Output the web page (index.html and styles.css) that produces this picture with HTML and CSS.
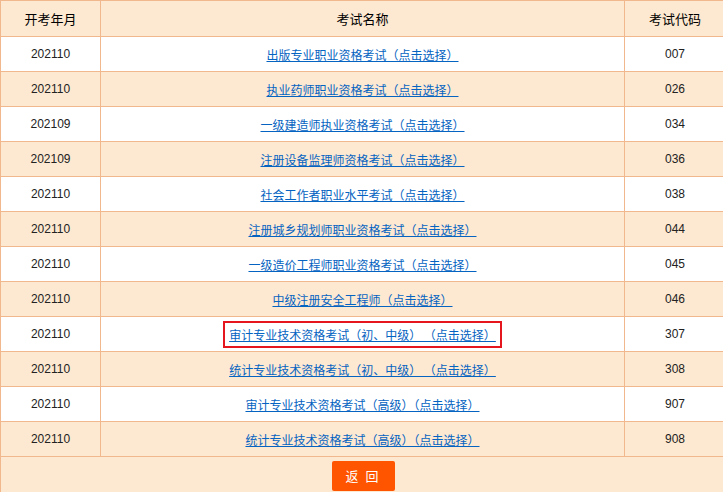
FILE: index.html
```html
<!DOCTYPE html>
<html lang="zh-CN">
<head>
  <meta charset="UTF-8">
  <title>考试选择</title>
  <link rel="stylesheet" href="styles.css">
</head>
<body>
  <table class="exam-table">
    <tr class="head">
      <th class="col-date">开考年月</th>
      <th class="col-name">考试名称</th>
      <th class="col-code">考试代码</th>
    </tr>
    <tr><td>202110</td><td><a href="#">出版专业职业资格考试（点击选择）</a></td><td>007</td></tr>
    <tr class="alt"><td>202110</td><td><a href="#">执业药师职业资格考试（点击选择）</a></td><td>026</td></tr>
    <tr><td>202109</td><td><a href="#">一级建造师执业资格考试（点击选择）</a></td><td>034</td></tr>
    <tr class="alt"><td>202109</td><td><a href="#">注册设备监理师资格考试（点击选择）</a></td><td>036</td></tr>
    <tr><td>202110</td><td><a href="#">社会工作者职业水平考试（点击选择）</a></td><td>038</td></tr>
    <tr class="alt"><td>202110</td><td><a href="#">注册城乡规划师职业资格考试（点击选择）</a></td><td>044</td></tr>
    <tr><td>202110</td><td><a href="#">一级造价工程师职业资格考试（点击选择）</a></td><td>045</td></tr>
    <tr class="alt"><td>202110</td><td><a href="#">中级注册安全工程师（点击选择）</a></td><td>046</td></tr>
    <tr><td>202110</td><td><a href="#" class="selected">审计专业技术资格考试（初、中级） （点击选择）</a></td><td>307</td></tr>
    <tr class="alt"><td>202110</td><td><a href="#">统计专业技术资格考试（初、中级） （点击选择）</a></td><td>308</td></tr>
    <tr><td>202110</td><td><a href="#">审计专业技术资格考试（高级）（点击选择）</a></td><td>907</td></tr>
    <tr class="alt"><td>202110</td><td><a href="#">统计专业技术资格考试（高级）（点击选择）</a></td><td>908</td></tr>
    <tr class="alt foot">
      <td colspan="3"><button class="back-btn">返 回</button></td>
    </tr>
  </table>
</body>
</html>
```

FILE: styles.css
```css
* {
  margin: 0;
  padding: 0;
  box-sizing: border-box;
}

body {
  background: #fff;
  font-family: "Liberation Sans", "Noto Sans CJK SC", sans-serif;
  font-size: 12px;
  color: #222;
}

.exam-table {
  width: 725px;
  border-collapse: collapse;
  table-layout: fixed;
}

.exam-table th,
.exam-table td {
  border: 1px solid #f1b88e;
  text-align: center;
  height: 35px;
  padding: 0;
}

.exam-table tr.head th {
  height: 36px;
  background: #fde9d1;
  font-weight: normal;
  font-size: 13px;
  color: #000;
  font-family: "Noto Sans CJK SC", sans-serif;
}

.col-date { width: 100px; }
.col-name { width: 524px; }
.col-code { width: 101px; }

.exam-table tr.alt td {
  background: #fde9d1;
}

.exam-table a {
  font-family: "Noto Sans CJK SC", sans-serif;
  color: #0563c1;
  text-decoration: underline;
  font-size: 12px;
}

.exam-table a.selected {
  display: inline-block;
  border: 2px solid #e5161d;
  padding: 3px 4px 2px;
  line-height: 18px;
}

.exam-table tr.foot td {
  height: 36px;
}

.back-btn {
  width: 63px;
  height: 30px;
  margin-top: 2px;
  border: none;
  border-radius: 2px;
  background: #ff5500;
  color: #fff;
  font-family: "Noto Sans CJK SC", sans-serif;
  font-size: 13px;
  letter-spacing: 2px;
  cursor: pointer;
}
```
